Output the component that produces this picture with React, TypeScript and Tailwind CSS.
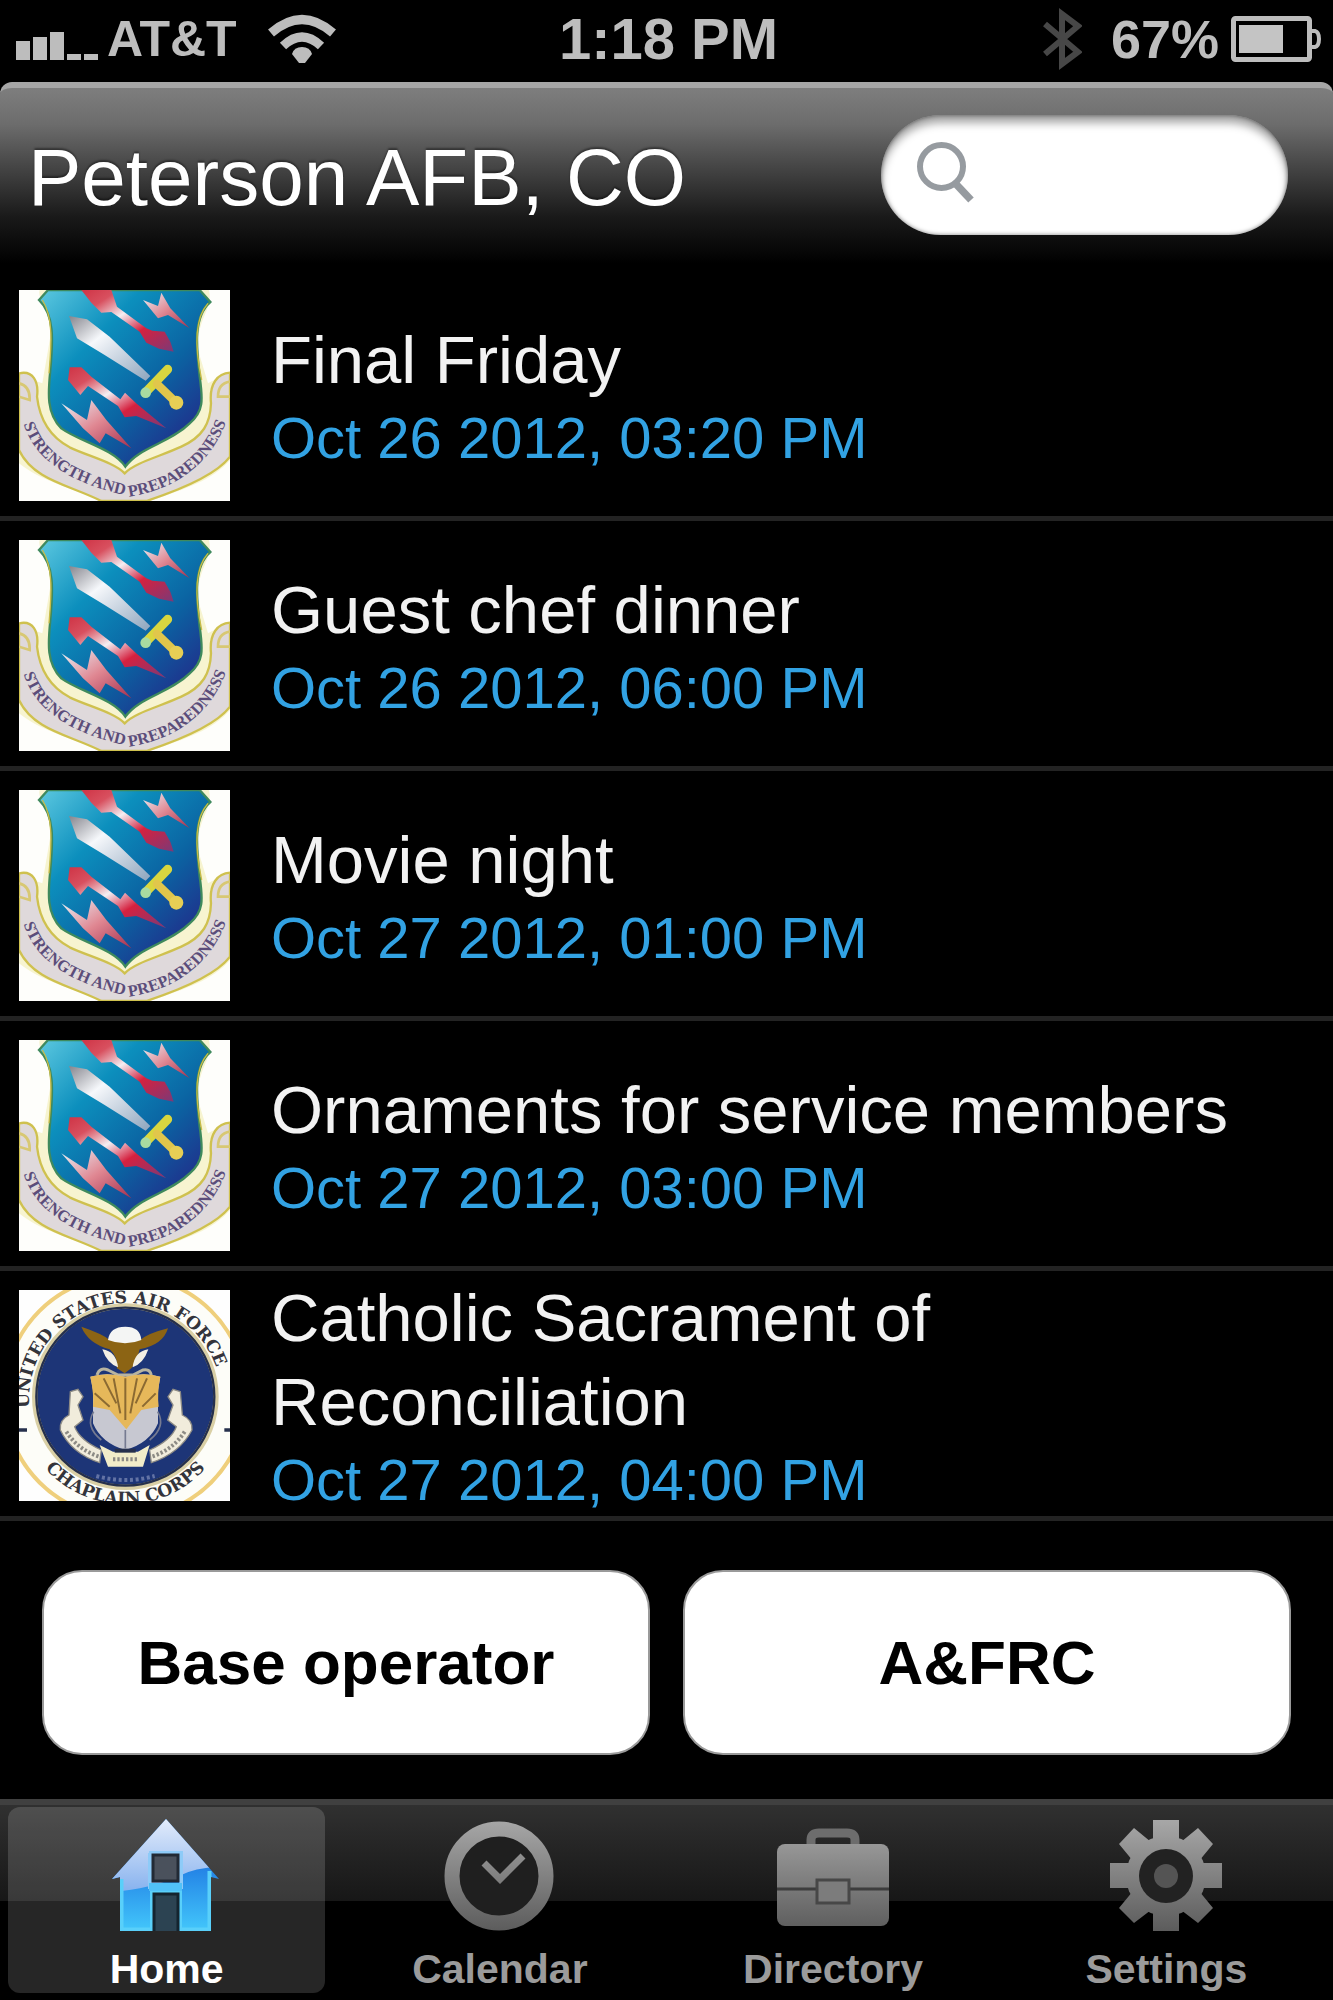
import type { ReactNode } from 'react';

type EventItem = {
  title: string;
  date: string;
  badge: 'wing' | 'chaplain';
};

const events: EventItem[] = [
  { title: 'Final Friday', date: 'Oct 26 2012, 03:20 PM', badge: 'wing' },
  { title: 'Guest chef dinner', date: 'Oct 26 2012, 06:00 PM', badge: 'wing' },
  { title: 'Movie night', date: 'Oct 27 2012, 01:00 PM', badge: 'wing' },
  { title: 'Ornaments for service members', date: 'Oct 27 2012, 03:00 PM', badge: 'wing' },
  { title: 'Catholic Sacrament of Reconciliation', date: 'Oct 27 2012, 04:00 PM', badge: 'chaplain' },
];

const SignalIcon = () => (
  <svg width="82" height="28" viewBox="0 0 82 28" fill="#bdbdbd" aria-hidden="true">
    <rect x="0" y="9" width="14" height="19" />
    <rect x="17" y="5" width="14" height="23" />
    <rect x="34" y="0" width="14" height="28" />
    <rect x="51" y="22" width="14" height="6" />
    <rect x="68" y="22" width="14" height="6" />
  </svg>
);

const WifiIcon = () => (
  <svg width="70" height="50" viewBox="0 0 70 50" fill="none" stroke="#bdbdbd" aria-hidden="true">
    <path d="M4 19 Q35 -8 66 19" strokeWidth="9" />
    <path d="M16 32 Q35 14 54 32" strokeWidth="9" />
    <path d="M25 40 Q27 33 35 33 Q43 33 45 40 L38 49 H32 Z" fill="#bdbdbd" stroke="none" />
  </svg>
);

const BluetoothIcon = () => (
  <svg width="40" height="64" viewBox="0 0 40 64" fill="none" stroke="#474747" strokeWidth="6" aria-hidden="true">
    <path d="M3 17 L36 45 L20 57 V7 L36 19 L3 47" />
  </svg>
);

const BatteryIcon = () => (
  <svg width="90" height="46" viewBox="0 0 90 46" aria-hidden="true">
    <rect x="2.500" y="2.500" width="76" height="41" rx="2" fill="none" stroke="#bdbdbd" strokeWidth="5" />
    <rect x="8" y="9" width="44" height="28" fill="#c4c4c4" />
    <path d="M79 15 H84 Q88 16 88 23 Q88 30 84 31 H79" fill="none" stroke="#bdbdbd" strokeWidth="4" />
  </svg>
);

const SearchIcon = () => (
  <svg className="shrink-0" width="58" height="62" viewBox="0 0 58 62" fill="none" stroke="#969ba0" aria-hidden="true">
    <circle cx="24.500" cy="24.500" r="21.500" strokeWidth="6" />
    <path d="M38 41 L54 58" strokeWidth="7.500" />
  </svg>
);

const WingBadge = () => (
  <svg className="block size-full" viewBox="58 30 633 633" role="img" aria-label="Wing shield">
    <defs>
      <linearGradient id="field" x1="0" y1="0" x2="1" y2="1">
        <stop offset="0" stopColor="#5cc8e0" />
        <stop offset="0.3" stopColor="#0c8fbd" />
        <stop offset="0.6" stopColor="#0b63a2" />
        <stop offset="0.85" stopColor="#1f318c" />
      </linearGradient>
      <linearGradient id="blade" x1="0" y1="0" x2="1" y2="1">
        <stop offset="0" stopColor="#85858d" />
        <stop offset="0.35" stopColor="#f6f8fb" />
        <stop offset="1" stopColor="#8da4bd" />
      </linearGradient>
      <linearGradient id="bolt" x1="0" y1="0" x2="1" y2="1">
        <stop offset="0" stopColor="#cf3446" />
        <stop offset="0.2" stopColor="#d8505f" />
        <stop offset="0.42" stopColor="#f3eef2" />
        <stop offset="0.65" stopColor="#d5213f" />
        <stop offset="1" stopColor="#7a3a78" />
      </linearGradient>
      <linearGradient id="paleBolt" x1="0" y1="0" x2="1" y2="1">
        <stop offset="0" stopColor="#e9f4fa" />
        <stop offset="0.5" stopColor="#e08792" />
        <stop offset="1" stopColor="#a5304f" />
      </linearGradient>
      <path id="mottoLeft" d="M72 432 C105 535 200 605 372 645" />
      <path id="mottoRight" d="M388 650 C520 630 630 560 682 420" />
    </defs>
    <rect x="58" y="30" width="633" height="633" fill="#fefefb" />
    <path d="M120 30 C112 60 155 90 152 170 L128 310 L58 285 L58 550 C120 600 200 620 310 663 L450 663 C560 625 640 600 691 540 L691 275 L625 310 L592 200 C600 100 640 90 628 30 Z" fill="#f1edb4" opacity="0.6" />
    <path d="M58 280 C100 270 118 305 112 350 C120 420 150 470 210 502 C270 530 345 548 375 580 C405 548 480 530 545 500 C610 470 632 430 634 370 C628 310 655 280 691 278 L691 530 C650 585 540 630 440 663 L305 663 C210 615 100 600 58 510 Z" fill="#dfd9db" stroke="#cfc14f" strokeWidth="7" />
    <path d="M58 310 Q92 318 90 360 L58 350 M691 305 Q655 310 655 350 L691 350" fill="none" stroke="#d8c873" strokeWidth="8" />
    <path d="M118 60 L145 30 H600 L632 66 C580 110 590 200 600 290 C610 360 612 395 570 430 C510 490 420 500 377 560 C340 505 240 485 185 445 C140 400 145 340 152 270 C160 180 165 105 118 60 Z" fill="url(#field)" stroke="#3f8a5d" strokeWidth="7" />
    <path d="M128 60 C163 115 155 200 148 280 M625 70 C580 120 588 215 606 300" fill="none" stroke="#c9bb47" strokeWidth="4" />
    <path d="M245 30 L335 30 L352 80 L440 145 L458 152 L495 155 L512 185 L522 215 L478 206 L440 188 L420 155 L335 96 L305 98 L275 68 Z" fill="url(#bolt)" />
    <path d="M430 60 L475 78 L485 38 L512 85 L570 145 L505 105 L475 115 Z" fill="url(#paleBolt)" />
    <path d="M208 108 L262 118 L330 170 L452 288 L438 302 L310 222 L232 175 Z" fill="url(#blade)" />
    <path d="M210 262 L245 262 L275 290 L362 358 L376 338 L412 372 L500 445 L410 408 L375 412 L355 378 L265 318 L242 345 L205 300 Z" fill="url(#bolt)" />
    <path d="M185 370 L262 420 L275 360 L320 420 L395 505 L318 460 L300 490 L250 445 Z" fill="url(#paleBolt)" />
    <path d="M504 268 L440 335" stroke="#d8d63f" strokeWidth="27" strokeLinecap="round" />
    <path d="M472 312 L530 368" stroke="#e1c64b" strokeWidth="25" strokeLinecap="round" />
    <circle cx="530" cy="368" r="21" fill="#e6cf55" />
    <circle cx="438" cy="338" r="16" fill="#a9dba0" />
    <g fill="#5b4d7a" fontFamily="'Liberation Serif', serif" fontWeight="700" fontSize="49">
      <text><textPath href="#mottoLeft">STRENGTH AND</textPath></text>
      <text><textPath href="#mottoRight">PREPAREDNESS</textPath></text>
    </g>
  </svg>
);

const ChaplainBadge = () => (
  <svg className="block size-full" viewBox="58 90 633 633" role="img" aria-label="Chaplain Corps seal">
    <defs>
      <path id="sealTop" d="M90 452 A289 289 0 1 1 664 452" />
      <path id="sealBottom" d="M96 568 A322 322 0 0 0 658 568" />
    </defs>
    <rect x="58" y="90" width="633" height="633" fill="#fefefe" />
    <circle cx="377" cy="410" r="364" fill="#fdfdf8" stroke="#efcf7c" strokeWidth="12" />
    <circle cx="377" cy="410" r="272" fill="#1d3577" stroke="#d9cfa5" strokeWidth="16" />
    <circle cx="377" cy="410" r="267" fill="none" stroke="#26304c" strokeWidth="7" />
    <g fill="#33343b" fontFamily="'DejaVu Serif', serif" fontWeight="700" fontSize="52">
      <text><textPath href="#sealTop" startOffset="8">UNITED STATES AIR FORCE</textPath></text>
      <text><textPath href="#sealBottom" startOffset="50%" textAnchor="middle">CHAPLAIN CORPS</textPath></text>
    </g>
    <path d="M58 510 H82 M674 510 H691" stroke="#26304c" strokeWidth="10" />
    <path d="M245 200 Q310 222 330 240 H422 Q445 220 505 205 Q490 255 420 268 Q410 310 395 325 L375 340 L352 325 Q355 290 330 268 Q265 250 245 200 Z" fill="#8c6414" />
    <path d="M325 240 Q330 200 377 200 Q422 200 425 240 Q377 260 325 240 Z" fill="#f4f5f4" />
    <path d="M308 268 Q350 275 355 322 Q322 310 308 268 Z M446 268 Q404 275 399 322 Q432 310 446 268 Z" fill="#f3efe4" />
    <path d="M292 345 Q300 320 325 330 L355 345 H400 L430 330 Q450 325 455 345" fill="none" stroke="#b8b4a0" strokeWidth="9" />
    <path d="M272 350 Q320 335 377 350 Q435 335 482 350 L475 390 V490 Q450 550 377 570 Q305 550 280 490 V390 Z" fill="#c7c8d1" />
    <path d="M272 350 Q320 335 377 350 Q435 335 482 350 Q472 400 477 440 L425 450 L380 508 L330 450 L280 440 Q283 400 272 350 Z" fill="#e6b85a" />
    <path d="M312 355 L350 430 M342 355 L362 460 M377 355 V480 M412 355 L392 460 M442 355 L408 430 M285 400 L330 440 M468 400 L428 440" fill="none" stroke="#8b6a32" strokeWidth="6" />
    <path d="M282 455 Q255 500 305 540 M474 455 Q500 500 450 540 M377 510 V565" fill="none" stroke="#767b91" strokeWidth="5" />
    <path d="M212 395 L235 388 L250 410 L235 435 L250 480 L225 500 Q240 540 305 570 L300 608 Q215 580 182 510 Q178 480 208 465 Z" fill="#f1ecdc" stroke="#8d8b85" strokeWidth="4" />
    <path d="M542 395 L520 388 L505 410 L520 435 L504 480 L530 500 Q515 540 450 570 L455 608 Q540 580 577 510 Q580 480 548 465 Z" fill="#f1ecdc" stroke="#8d8b85" strokeWidth="4" />
    <path d="M300 555 L340 575 H415 L450 555 L430 620 H325 Z" fill="#f1ecc9" />
    <path d="M345 566 H408 V578 H345 Z" fill="#26304c" />
    <path d="M200 515 Q235 570 300 590 M555 515 Q520 570 455 590 M340 598 H414" fill="none" stroke="#8d8b85" strokeWidth="12" strokeDasharray="7 6" />
    <path d="M290 648 Q377 672 465 648" fill="none" stroke="#6373a4" strokeWidth="12" strokeDasharray="9 8" />
  </svg>
);

const IconGradient = ({ id }: { id: string }) => (
  <defs>
    <linearGradient id={id} x1="0" y1="0" x2="0" y2="112" gradientUnits="userSpaceOnUse">
      <stop offset="0" stopColor="#a8a8a8" />
      <stop offset="1" stopColor="#5c5c5c" />
    </linearGradient>
  </defs>
);

const HomeIcon = () => (
  <svg width="112" height="112" viewBox="0 0 112 112" aria-hidden="true">
    <defs>
      <linearGradient id="wall" x1="0" y1="50" x2="0" y2="112" gradientUnits="userSpaceOnUse">
        <stop offset="0" stopColor="#2484e6" />
        <stop offset="1" stopColor="#43c7fb" />
      </linearGradient>
      <linearGradient id="roof" x1="0" y1="0" x2="0" y2="75" gradientUnits="userSpaceOnUse">
        <stop offset="0" stopColor="#e3ecfb" />
        <stop offset="1" stopColor="#84b0ee" />
      </linearGradient>
      <clipPath id="house">
        <path d="M55 0 L108 60 L100 58 V112 H67 V74 H42 V112 H9 V58 L1 60 Z" />
      </clipPath>
    </defs>
    <g clipPath="url(#house)">
      <rect width="112" height="112" fill="url(#wall)" />
      <path d="M0 0 H112 V48 Q85 48 68 57 Q40 70 0 73 Z" fill="url(#roof)" />
      <path d="M10.500 60 V110.500 H41 V74 H69 V110.500 H98.500 V52" fill="none" stroke="#59d0fa" strokeWidth="4" />
      <path d="M39 34 V68 H70 V34 H38" fill="none" stroke="#8ecbf8" strokeWidth="4" />
      <path d="M38 68 H71" stroke="#51c2f8" strokeWidth="8" />
    </g>
    <rect x="42" y="36" width="25" height="26" fill="#4a515c" stroke="#222a35" strokeWidth="3" />
    <rect x="42" y="74" width="25" height="38" fill="#2c4352" />
    <path d="M43 112 V75 H67 V112" fill="none" stroke="#14242f" strokeWidth="3" />
  </svg>
);

const ClockIcon = () => (
  <svg width="112" height="112" viewBox="0 0 112 112" fill="none" stroke="url(#clockFill)" aria-hidden="true">
    <IconGradient id="clockFill" />
    <circle cx="55" cy="57" r="47" fill="#1f1f1f" strokeWidth="15" />
    <path d="M40 44 L56 60 L79 37" strokeWidth="7" />
  </svg>
);

const BriefcaseIcon = () => (
  <svg width="112" height="112" viewBox="0 0 112 112" fill="url(#caseFill)" aria-hidden="true">
    <IconGradient id="caseFill" />
    <path d="M34 27 V21 Q34 14 42 14 H70 Q78 14 78 21 V27" fill="none" stroke="#6d6d6d" strokeWidth="9" />
    <rect x="0" y="25" width="112" height="82" rx="8" />
    <path d="M0 70 H112" stroke="#3d3d3d" strokeWidth="3" />
    <rect x="40" y="61" width="32" height="23" fill="#7c7c7c" stroke="#474747" strokeWidth="3" />
  </svg>
);

const GearIcon = () => (
  <svg width="112" height="112" viewBox="0 0 112 112" fill="url(#gearFill)" aria-hidden="true">
    <IconGradient id="gearFill" />
    <circle cx="56" cy="57" r="40" />
    <path d="M43 1 H69 V22 H43 Z M43 92 H69 V112 H43 Z M0 44 H20 V69 H0 Z M92 44 H112 V69 H92 Z" />
    <path d="M24 9 L41 23 L23 42 L9 25 Z M88 9 L103 25 L89 42 L71 23 Z M24 104 L9 89 L23 72 L41 91 Z M88 104 L71 91 L89 72 L103 89 Z" />
    <circle cx="56" cy="57" r="27" fill="#222" />
    <circle cx="56" cy="57" r="12" fill="#545454" />
  </svg>
);

type TabProps = {
  label: string;
  active?: boolean;
  children: ReactNode;
};

const Tab = ({ label, active = false, children }: TabProps) => (
  <button
    type="button"
    aria-current={active ? 'page' : undefined}
    className={`mx-2 mt-[2px] mb-[7px] flex flex-col items-center gap-[14px] rounded-xl pt-3 text-[41px] leading-[48px] font-bold ${
      active ? 'bg-white/15 text-white' : 'text-[#9b9b9b]'
    }`}
  >
    {children}
    {label}
  </button>
);

const EventRow = ({ title, date, badge }: EventItem) => (
  <li className="flex h-[250px] items-center gap-[41px] border-b-[5px] border-[#232323] pt-1 pr-8 pl-[19px]">
    <div className="size-[211px] shrink-0 overflow-hidden">
      {badge === 'wing' ? <WingBadge /> : <ChaplainBadge />}
    </div>
    <div className="min-w-0">
      <h2 className="text-[67px] leading-[84px] text-[#f2f2f2]">{title}</h2>
      <p className="text-[58px] leading-[72px] text-[#32a2e3]">{date}</p>
    </div>
  </li>
);

export default function App() {
  return (
    <div className="flex min-h-screen flex-col bg-black font-['Liberation_Sans',Arial,sans-serif]">
      <div className="grid h-[82px] grid-cols-[1fr_auto_1fr] items-center pr-3 pb-1 pl-4 text-[54px] leading-[64px] font-bold text-[#bdbdbd]">
        <div className="flex items-center">
          <div className="pt-[14px]">
            <SignalIcon />
          </div>
          <span className="ml-[9px] text-[50px]">AT&amp;T</span>
          <div className="ml-[30px]">
            <WifiIcon />
          </div>
        </div>
        <span className="text-[58px]">1:18 PM</span>
        <div className="flex items-center justify-end">
          <BluetoothIcon />
          <span className="mr-3 ml-[29px]">67%</span>
          <BatteryIcon />
        </div>
      </div>

      <header className="flex h-[189px] items-start justify-between rounded-t-xl border-t-[6px] border-[#a6a6a6] bg-[linear-gradient(to_bottom,#7e7e7e_0%,#6c6c6c_20%,#474747_42%,#1a1a1a_70%,#000_96%)] pt-[27px] pr-[45px] pl-[28px]">
        <h1 className="pt-[3px] text-[80px] leading-[120px] text-white [text-shadow:0_-2px_2px_rgba(0,0,0,0.4)]">
          Peterson AFB, CO
        </h1>
        <div className="flex h-[120px] w-[407px] items-center rounded-full bg-white pr-8 pb-1 pl-9 shadow-[inset_0_8px_8px_rgba(0,0,0,0.35),inset_0_0_4px_rgba(0,0,0,0.5)]">
          <SearchIcon />
          <input
            type="search"
            aria-label="Search"
            className="ml-3 h-16 w-full min-w-0 bg-transparent text-5xl text-black outline-none"
          />
        </div>
      </header>

      <main className="flex flex-1 flex-col">
        <ul>
          {events.map((event) => (
            <EventRow key={event.title} {...event} />
          ))}
        </ul>
        <div className="flex gap-[33px] px-[42px] pt-[49px] pb-[44px] text-[62px] font-bold text-black">
          <button type="button" className="h-[185px] flex-1 rounded-[40px] border-2 border-[#9a9a9a] bg-white">
            Base operator
          </button>
          <button type="button" className="h-[185px] flex-1 rounded-[40px] border-2 border-[#9a9a9a] bg-white">
            A&amp;FRC
          </button>
        </div>
      </main>

      <nav className="grid grid-cols-4 border-t-[6px] border-[#404040] bg-[linear-gradient(to_bottom,#303030_0%,#171717_49%,#000_49%)]">
        <Tab label="Home" active>
          <HomeIcon />
        </Tab>
        <Tab label="Calendar">
          <ClockIcon />
        </Tab>
        <Tab label="Directory">
          <BriefcaseIcon />
        </Tab>
        <Tab label="Settings">
          <GearIcon />
        </Tab>
      </nav>
    </div>
  );
}
